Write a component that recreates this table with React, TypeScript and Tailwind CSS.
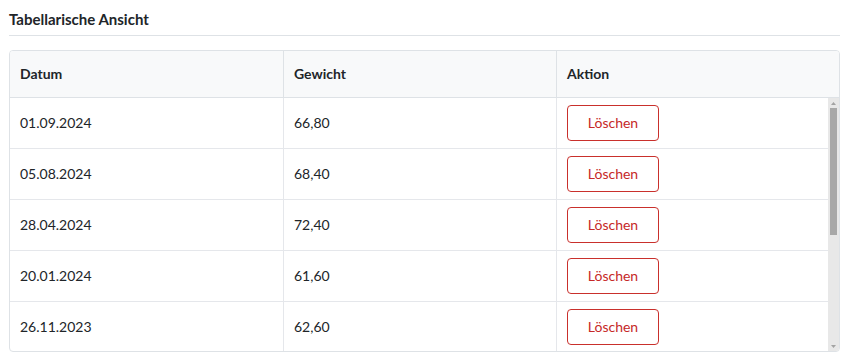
import React from "react";

const rows = [
  { d: "01.09.2024", w: "66,80" },
  { d: "05.08.2024", w: "68,40" },
  { d: "28.04.2024", w: "72,40" },
  { d: "20.01.2024", w: "61,60" },
  { d: "26.11.2023", w: "62,60" },
];

export default function App() {
  return (
    <div
      className="w-[849px] h-[360px] bg-white px-[9px] pt-[10px] text-[#212529]"
      style={{ fontFamily: "Lato, 'Open Sans', sans-serif" }}
    >
      <div className="border-b border-[#dee2e6] pb-[6px]">
        <h2 className="text-[15px] leading-[19px] font-bold">Tabellarische Ansicht</h2>
      </div>
      <div className="mt-[14px] border border-[#dee2e6] rounded-[4px] overflow-hidden text-[14px]">
        <div className="grid grid-cols-[274px_273px_1fr] h-[47px] bg-[#f8f9fa] border-b border-[#dee2e6] font-bold">
          <div className="flex items-center pl-[10px] pb-[1px] border-r border-[#dee2e6]">Datum</div>
          <div className="flex items-center pl-[10px] pb-[1px] border-r border-[#dee2e6]">Gewicht</div>
          <div className="flex items-center pl-[10px] pb-[1px]">Aktion</div>
        </div>
        <div className="flex h-[253px] overflow-hidden">
          <div className="flex-1">
            {rows.map((r) => (
              <div
                key={r.d}
                className="grid grid-cols-[274px_273px_1fr] h-[51px] border-b border-[#e5e7eb]"
              >
                <div className="flex items-center pl-[10px] pb-[1px] border-r border-[#e5e7eb]">{r.d}</div>
                <div className="flex items-center pl-[10px] pb-[1px] border-r border-[#e5e7eb]">{r.w}</div>
                <div className="flex items-center pl-[10px]">
                  <button className="w-[92px] h-[36px] pb-[2px] border border-[#c9302c] rounded-[4px] text-[#c62828] text-[14px] bg-white">
                    Löschen
                  </button>
                </div>
              </div>
            ))}
          </div>
          <div className="w-[11px] bg-[#e8e8e8] flex flex-col items-center">
            <div className="h-[10px] flex items-center justify-center">
              <svg width="5" height="3" viewBox="0 0 5 3">
                <polygon points="2.5,0 5,3 0,3" fill="#a3a3a3" />
              </svg>
            </div>
            <div className="w-[7px] h-[127px] bg-[#a8a8a8]" />
            <div className="flex-1" />
            <div className="h-[10px] flex items-center justify-center">
              <svg width="5" height="3" viewBox="0 0 5 3">
                <polygon points="0,0 5,0 2.5,3" fill="#a3a3a3" />
              </svg>
            </div>
          </div>
        </div>
      </div>
    </div>
  );
}
